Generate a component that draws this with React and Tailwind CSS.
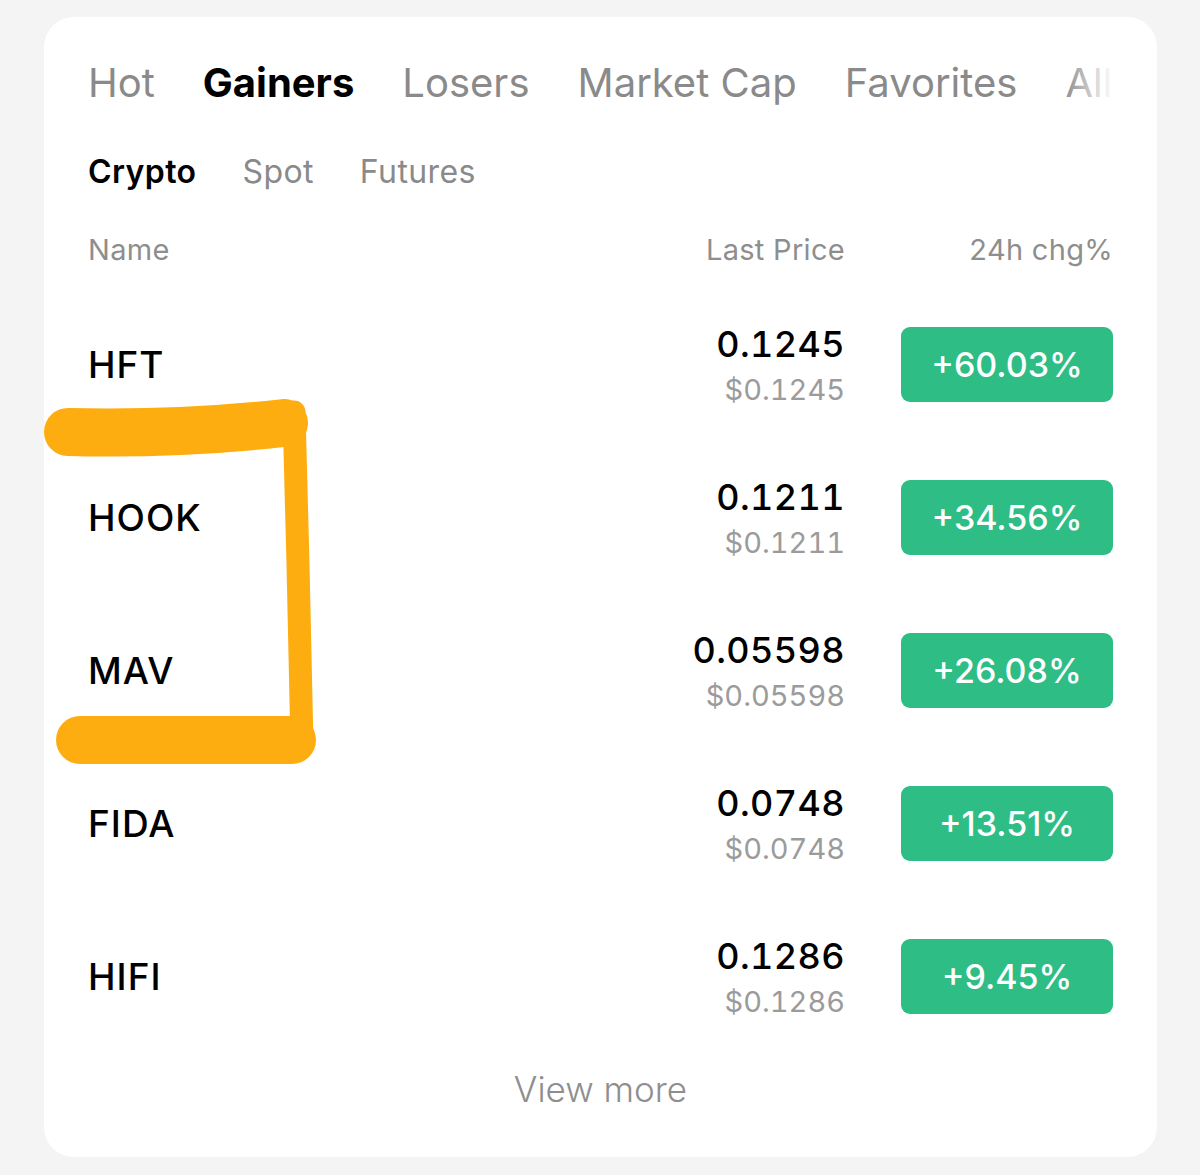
import React from "react";

const rows = [
  { name: "HFT", price: "0.1245", usd: "$0.1245", chg: "+60.03%" },
  { name: "HOOK", price: "0.1211", usd: "$0.1211", chg: "+34.56%" },
  { name: "MAV", price: "0.05598", usd: "$0.05598", chg: "+26.08%" },
  { name: "FIDA", price: "0.0748", usd: "$0.0748", chg: "+13.51%" },
  { name: "HIFI", price: "0.1286", usd: "$0.1286", chg: "+9.45%" },
];

const tabs = ["Hot", "Gainers", "Losers", "Market Cap", "Favorites", "All"];

export default function App() {
  return (
    <div
      className="relative w-[1200px] h-[1175px] bg-[#f4f4f4] pt-[17px] px-[44px] overflow-hidden"
      style={{ fontFamily: "Inter, 'Noto Sans', sans-serif" }}
    >
      <div className="bg-white rounded-[30px] w-[1113px] h-[1140px] px-[44px] flex flex-col">
        {/* main tabs */}
        <div className="relative h-[132px] flex items-center overflow-hidden">
          <div className="flex items-center gap-[48px] whitespace-nowrap text-[40px] leading-[48px] text-[#8a8a8a]">
            {tabs.map((t) => (
              <span
                key={t}
                className={t === "Gainers" ? "font-bold text-black" : "font-normal"}
              >
                {t}
              </span>
            ))}
          </div>
          <div className="absolute right-0 top-0 h-full w-[50px] bg-gradient-to-r from-white/0 to-white" />
        </div>

        {/* sub tabs */}
        <div className="h-[46px] flex items-center gap-[46px] text-[32px] leading-[40px] text-[#8a8a8a] tracking-[0.4px]">
          <span className="font-semibold text-black">Crypto</span>
          <span>Spot</span>
          <span>Futures</span>
        </div>

        {/* header */}
        <div className="h-[93px] pt-[16px] flex items-center text-[29px] text-[#8e8e8e] tracking-[0.3px]">
          <span className="flex-1">Name</span>
          <span className="w-[268px] text-right">Last Price</span>
          <span className="w-[268px] text-right">24h chg%</span>
        </div>

        {/* rows */}
        {rows.map((r) => (
          <div key={r.name} className="h-[153px] flex items-center">
            <span className="flex-1 text-[37px] font-medium text-black tracking-[1px]">{r.name}</span>
            <div className="flex flex-col items-end mt-[4px] tabular-nums">
              <span className="text-[36px] leading-[46px] font-medium text-black tracking-[0.4px]">{r.price}</span>
              <span className="text-[29px] leading-[46px] text-[#9b9b9b]">{r.usd}</span>
            </div>
            <div className="ml-[56px] w-[212px] h-[75px] rounded-[9px] bg-[#2ebd85] flex items-center justify-center text-white text-[34px] font-medium">
              {r.chg}
            </div>
          </div>
        ))}

        {/* view more */}
        <div className="h-[72px] flex items-center justify-center text-[35px] font-light text-[#8e8e8e]">
          View more
        </div>
      </div>

      {/* highlighter overlay */}
      <svg
        className="absolute left-0 top-0 pointer-events-none"
        width="1200"
        height="1175"
        viewBox="0 0 1200 1175"
      >
        <g stroke="#fdad10" fill="none" strokeLinecap="round" strokeLinejoin="round">
          <path d="M 68 432 C 150 434, 220 430, 284 423" strokeWidth="48" />
          <path d="M 294 412 C 297 520, 300 640, 302 745" strokeWidth="23" />
          <path d="M 80 740 C 160 740, 230 740, 292 740" strokeWidth="48" />
        </g>
      </svg>
    </div>
  );
}
